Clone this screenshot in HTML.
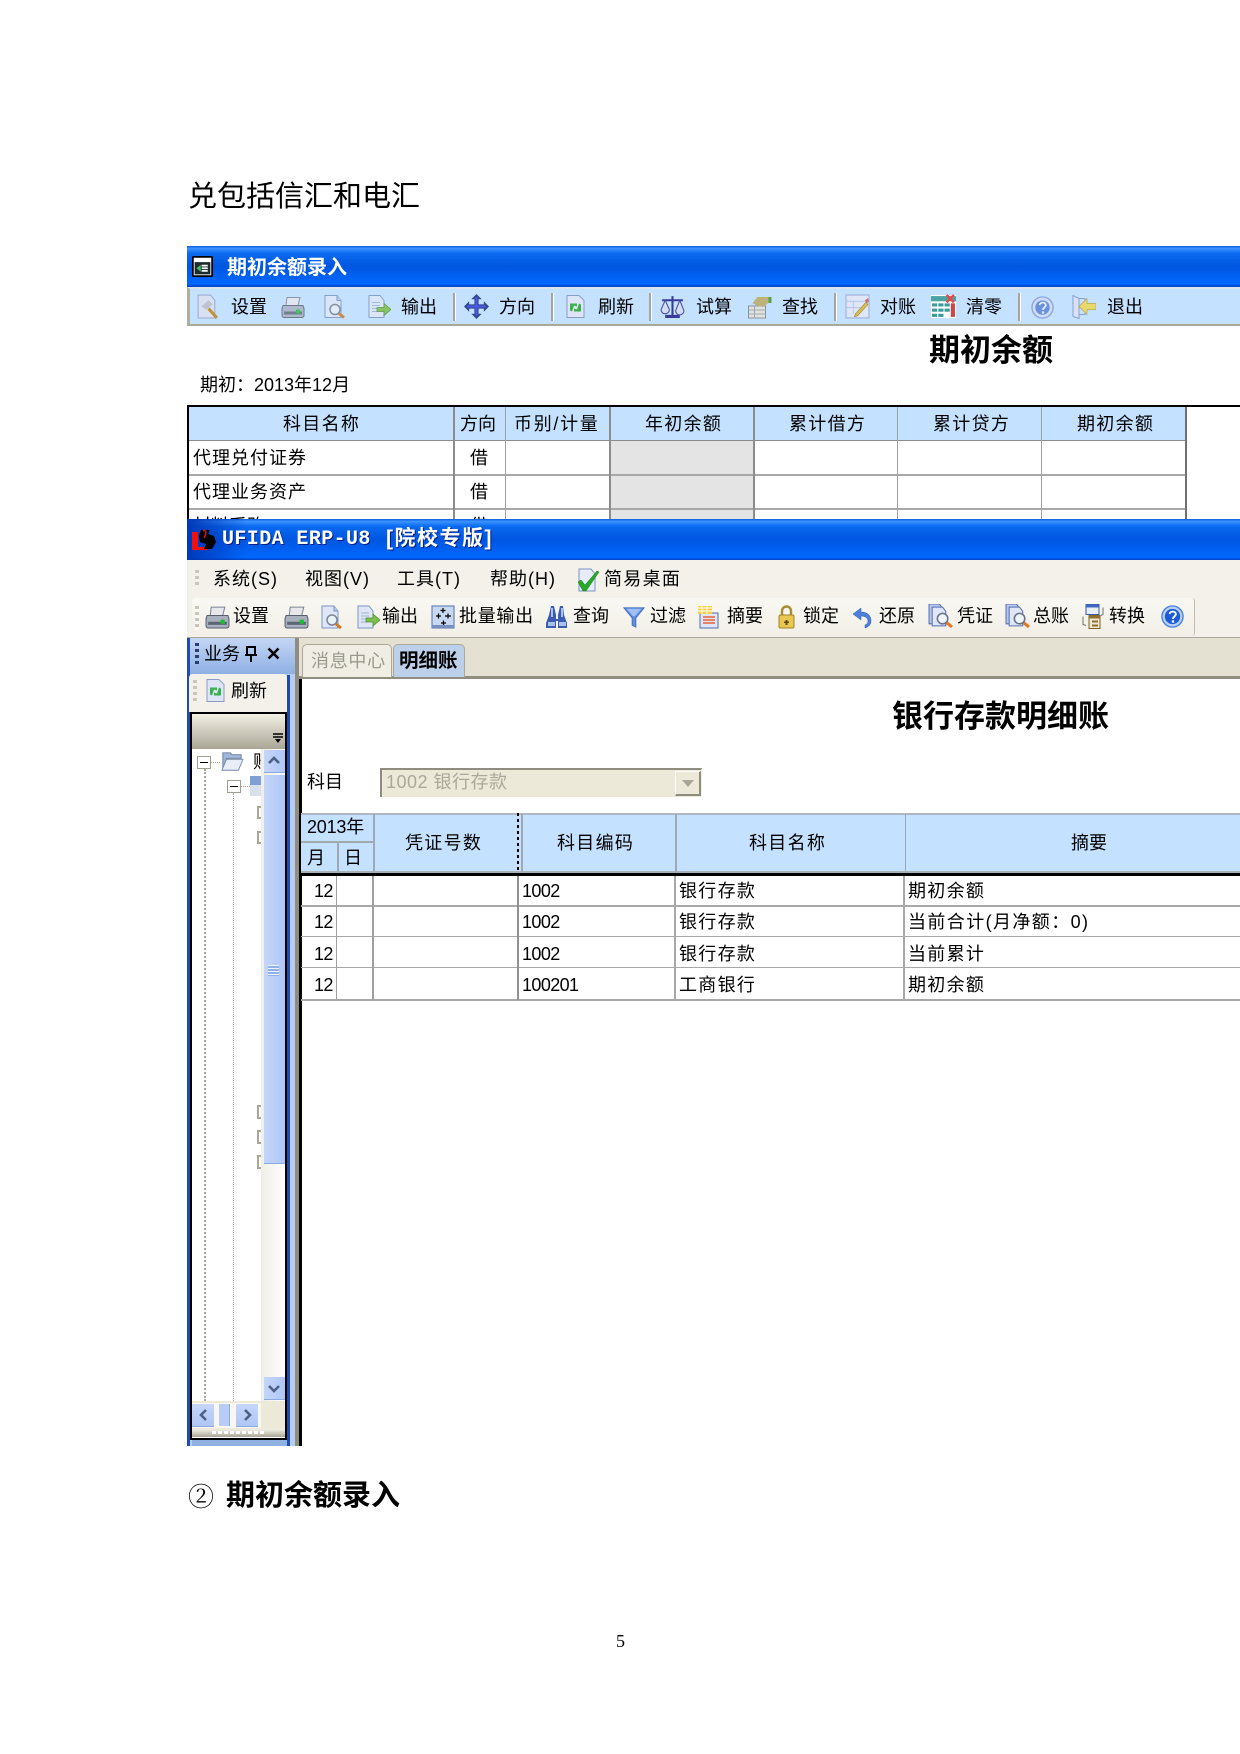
<!DOCTYPE html>
<html lang="zh"><head><meta charset="utf-8"><title>期初余额录入</title>
<style>
html,body{margin:0;padding:0;background:#fff}
#p{position:relative;width:1240px;height:1754px;overflow:hidden;background:#fff;font-family:"Liberation Sans","WenQuanYi Zen Hei","Noto Sans CJK SC",sans-serif;color:#000}
.t{position:absolute;white-space:nowrap;line-height:18px;font-size:18px;height:18px}
.r{position:absolute}
svg.i{position:absolute;overflow:hidden}
.b{font-weight:bold}
.w{letter-spacing:1.300px}
.d{letter-spacing:-.6px}
.m{letter-spacing:1px}
.title{position:absolute;left:187px;width:1053px;height:41px;background:linear-gradient(#0a5fe0 0,#3c93ff 6%,#0a6af0 18%,#0056e0 50%,#0064f8 82%,#0068ff 92%,#003fc0 100%)}
</style></head><body><div id="p">
<svg width="0" height="0" style="position:absolute"><defs>
<symbol id="pr" viewBox="0 0 24 24"><path d="M6 3h13l-2 8H5z" fill="#e8e8ec" stroke="#7c8494"/><path d="M2 11h20l1 3v7a2 2 0 0 1-2 2H3a2 2 0 0 1-2-2v-7z" fill="#a9b1bf" stroke="#58606e"/><path d="M3 17h18v3H3z" fill="#5d6674"/><rect x="15" y="15" width="4" height="4" fill="#18c030"/></symbol>
<symbol id="pv" viewBox="0 0 24 24"><path d="M2 1h12l4 5v17H2z" fill="#dfe7f7" stroke="#7c94c4"/><path d="M14 1v5h4" fill="#b8c8e8" stroke="#7c94c4"/><circle cx="12" cy="15" r="5" fill="#e8f0f8" stroke="#7a8496" stroke-width="1.500"/><path d="M16 19l5 4" stroke="#d07a28" stroke-width="3"/></symbol>
<symbol id="ex" viewBox="0 0 24 24"><path d="M2 1h11l4 5v17H2z" fill="#dfe7f7" stroke="#7c94c4"/><path d="M5 8h8M5 11h8M5 14h6M5 17h6" stroke="#9cb0d8"/><path d="M10 13h7V9l7 6-7 6v-4h-7z" fill="#7cc04c" stroke="#4c8a2c" stroke-width=".7"/></symbol>
<symbol id="se" viewBox="0 0 24 24"><path d="M3 1h12l4 5v17H3z" fill="#d8e0f2" stroke="#9cacd0"/><path d="M6 12l7-6 4 4-6 5z" fill="#bcc2d0"/><path d="M13 14l8 9" stroke="#c09438" stroke-width="3"/></symbol>
<symbol id="dr" viewBox="0 0 24 24"><path d="M12 0l5 5h-3v5h5V7l5 5-5 5v-3h-5v5h3l-5 5-5-5h3v-5H5v3l-5-5 5-5v3h5V5H7z" fill="#33478c"/><path d="M11 3h2v18h-2zM3 11h18v2H3z" fill="#4a5ae8"/></symbol>
<symbol id="rf" viewBox="0 0 24 24"><path d="M3 1h12l5 5v17H3z" fill="#dde5f6" stroke="#8c9cc8"/><path d="M6 9h7v3l-3-1-2 6-2-1zM17 17h-7v-3l3 1 2-6 2 1z" fill="#3cb04c"/></symbol>
<symbol id="sc" viewBox="0 0 24 24"><path d="M11 2h2v18h-2zM5 20h14v3H5zM2 5h20v2H2z" fill="#383c98"/><path d="M5 6l-4 9a4 4 0 0 0 8 0zM19 6l-4 10a4 4 0 0 0 8 0z" fill="#d4dcf0" stroke="#484e9c"/></symbol>
<symbol id="fd" viewBox="0 0 24 24"><rect x="1" y="11" width="17" height="12" fill="#e0e2e2" stroke="#8c9498"/><path d="M1 15h17M1 19h17M7 11v12" stroke="#a0a8ac"/><path d="M5 8l5-6h11l3 1v4l-3 1-6 4-5-1z" fill="#bcb27c"/><path d="M21 2h3v6h-3z" fill="#58a048"/></symbol>
<symbol id="dz" viewBox="0 0 24 24"><rect x="1" y="1" width="22" height="22" fill="#dfe7f6" stroke="#9cacd8"/><path d="M1 7h22M1 13h14M8 7v12" stroke="#b8c8e8"/><path d="M10 19l10-11 2 2-10 11-3 1z" fill="#d8c050" stroke="#a08830" stroke-width=".6"/><path d="M19 6l3-2 1 3-2 2z" fill="#d07070"/></symbol>
<symbol id="qz" viewBox="0 0 24 24"><rect x="0" y="1" width="24" height="22" fill="#fff"/><rect x="0" y="2" width="24" height="5" fill="#4aa4a4"/><g fill="#3c9c9c"><rect x="1" y="9" width="5" height="3"/><rect x="7" y="9" width="5" height="3"/><rect x="13" y="9" width="5" height="3"/><rect x="1" y="14" width="5" height="3"/><rect x="7" y="14" width="5" height="3"/><rect x="13" y="14" width="5" height="3"/><rect x="1" y="19" width="5" height="3"/><rect x="7" y="19" width="5" height="3"/></g><rect x="19" y="9" width="4" height="13" fill="#c84848"/><path d="M15 1l7 7M22 1l-7 7" stroke="#e84848" stroke-width="2.400"/></symbol>
<symbol id="he" viewBox="0 0 24 24"><circle cx="12" cy="12" r="11" fill="#cfdcf4" stroke="#8ca8e0" stroke-width="1.500"/><circle cx="12" cy="12" r="7.500" fill="#6a92dc"/><path d="M9 9.500c0-3.500 6.500-3.500 6.500 0 0 2.500-3 2.500-3 5" fill="none" stroke="#dfe8f8" stroke-width="2"/><rect x="11.300" y="16" width="2.400" height="2.400" fill="#dfe8f8"/></symbol>
<symbol id="hc" viewBox="0 0 24 24"><circle cx="12" cy="12" r="11" fill="#b8d0f8" stroke="#4c84e0" stroke-width="1.500"/><circle cx="12" cy="12" r="8" fill="#1c5cd8"/><path d="M9 9.500c0-3.500 6.500-3.500 6.500 0 0 2.500-3 2.500-3 5" fill="none" stroke="#fff" stroke-width="2"/><rect x="11.300" y="16" width="2.400" height="2.400" fill="#fff"/></symbol>
<symbol id="qt" viewBox="0 0 24 24"><path d="M1 1l6 3v20l-6-2z" fill="#d8e2f6" stroke="#8ca0d0"/><path d="M7 4h6v4M7 20h6v-3" fill="none" stroke="#8ca0d0"/><path d="M24 9h-9V4l-8 8 8 8v-5h9z" fill="#e8d870" stroke="#b8a848" stroke-width=".7"/></symbol>
<symbol id="ck" viewBox="0 0 24 24"><path d="M3 1h12l4 5v17H3z" fill="#e6ecf8" stroke="#7c94c4"/><path d="M2 14l3-2 4 5L21 3l2 1L10 23H7z" fill="#28a828" stroke="#187818" stroke-width=".5"/></symbol>
<symbol id="bl" viewBox="0 0 24 24"><rect x="1" y="1" width="22" height="22" fill="#c8d8f0" stroke="#5070b0"/><path d="M12 3v5M9.500 5.500h5M5 11h5M7.500 8.500v5M14 11h6M17 8.500v5M10 18h5M12.500 15.500v5" stroke="#000" stroke-width="1.200"/><path d="M1 20h22v3H1z" fill="#7890c0"/></symbol>
<symbol id="bi" viewBox="0 0 24 24"><path d="M6 1h3l2 9v4h2v-4l2-9h3l1 9 3 8v5h-9v-7h-2v7H1v-5l3-8z" fill="#3c5cb0"/><path d="M6 3h2v9H6zM16 3h2v9h-2zM3 17h7v4H3zM14 17h7v4h-7z" fill="#a8c0ec"/></symbol>
<symbol id="fi" viewBox="0 0 24 24"><path d="M1 2h22L14 13v10l-4-2v-8z" fill="#6490e0" stroke="#3c68c0"/><path d="M4 3h16l-7 8h-2z" fill="#a0c0f4"/></symbol>
<symbol id="su" viewBox="0 0 24 24"><path d="M3 8h18v15H3z" fill="#dfe7f7" stroke="#4c6cb0"/><path d="M6 12h12M6 15h12M6 18h12" stroke="#e86038" stroke-width="1.500"/><path d="M1 1h14v8H1z" fill="#f8d040"/><path d="M1 3h14M1 6h14M5 1v8M10 1v8" stroke="#fff"/></symbol>
<symbol id="lk" viewBox="0 0 17 24"><path d="M4 11V6a4.500 4.500 0 0 1 9 0v5" fill="none" stroke="#a88c30" stroke-width="2.400"/><rect x="1" y="10" width="15" height="13" rx="1.500" fill="#e8c850" stroke="#a08428"/><path d="M7.500 15h2v5h-2zM6 16.500h5v1.500H6z" fill="#604c10"/></symbol>
<symbol id="un" viewBox="0 0 20 24"><path d="M1 9l8-6v4c7 0 10 4 10 9 0 3-2 6-6 7v-3c2-1 3-2 3-4 0-3-3-5-7-5v4z" fill="#4c80dc" stroke="#2c5cb0" stroke-width=".5"/></symbol>
<symbol id="vo" viewBox="0 0 24 24"><path d="M1 0h10l3 4v15H1z" fill="#b8c8ec" stroke="#5870b0"/><path d="M4 3h10l3 4v14H4z" fill="#dfe7f7" stroke="#5870b0"/><circle cx="14" cy="14" r="5" fill="#eef4fa" stroke="#68748a" stroke-width="1.500"/><path d="M18 18l5 4" stroke="#e07828" stroke-width="3"/></symbol>
<symbol id="zh" viewBox="0 0 24 24"><path d="M5 0h13v10H5z" fill="#e8eef8" stroke="#3858a8"/><path d="M5 0h13v3H5z" fill="#4068c0"/><path d="M8 11h11v13H8z" fill="#f0e8d0" stroke="#806028"/><path d="M8 11h11v3H8zM11 16h6v2h-6zM11 20h6v2h-6z" fill="#907030"/><path d="M2 12v8l3 1M22 3v7l-2 1" fill="none" stroke="#707070"/></symbol>
<symbol id="wn" viewBox="0 0 24 24"><rect x="0" y="0" width="24" height="24" rx="2" fill="#000"/><rect x="2" y="2" width="20" height="20" fill="#fff"/><rect x="3" y="7" width="18" height="14" fill="#1c2c2c"/><path d="M5 14l5-4v8z" fill="#40c060"/><path d="M11 10h7v2h-7zM11 13h7v2h-7zM11 16h7v2h-7z" fill="#fff"/></symbol>
<symbol id="fo" viewBox="0 0 24 24"><path d="M2 2h8l2 2h10v4H6L2 20z" fill="#a0b8dc" stroke="#6a7a98"/><path d="M6 9h18l-5 12H1z" fill="#e8eef8" stroke="#7888a8"/></symbol>
<symbol id="lg" viewBox="0 0 26 22"><path d="M1 3h6v15h10v3H1z" fill="#f01010"/><path d="M10 1h9l-2 4 6 2 2 6-4 7h-8l2-5-6-2-1-6z" fill="#000"/><path d="M12 2c3-2 4 2 1 7" fill="none" stroke="#d01030" stroke-width="1.600"/></symbol>
</defs></svg>

<div class="t" style="left:188px;top:182px;font-size:29px;line-height:30px;height:30px">兑包括信汇和电汇</div>

<!-- window 1 -->
<div class="title" style="top:246px"></div>
<svg class="i" style="left:192px;top:256px" width="21" height="21"><use href="#wn"/></svg>
<div class="t b" style="left:227px;top:258px;font-size:20px;line-height:20px;height:20px;color:#fff">期初余额录入</div>
<div class="r" style="left:187px;top:287px;width:1053px;height:39px;background:#c4e1ff;box-sizing:border-box;border-top:2px solid #d8e4ee;border-left:3px solid #b0ae9c;border-bottom:2px solid #aca899"></div>

<svg class="i" style="left:195px;top:294px" width="25" height="25"><use href="#se"/></svg><span class="t" style="left:231px;top:298px">设置</span>
<svg class="i" style="left:281px;top:294px" width="24" height="25"><use href="#pr" opacity=".8"/></svg>
<svg class="i" style="left:323px;top:294px" width="24" height="25"><use href="#pv" opacity=".85"/></svg>
<svg class="i" style="left:367px;top:294px" width="24" height="25"><use href="#ex" opacity=".85"/></svg><span class="t" style="left:401px;top:298px">输出</span>
<div class="r" style="left:453px;top:293px;width:2px;height:28px;background:#a8a698;border-right:1px solid #fff"></div>
<svg class="i" style="left:464px;top:294px" width="25" height="25"><use href="#dr"/></svg><span class="t" style="left:499px;top:298px">方向</span>
<div class="r" style="left:551px;top:293px;width:2px;height:28px;background:#a8a698;border-right:1px solid #fff"></div>
<svg class="i" style="left:564px;top:293px" width="24" height="27"><use href="#rf"/></svg><span class="t" style="left:598px;top:298px">刷新</span>
<div class="r" style="left:649px;top:293px;width:2px;height:28px;background:#a8a698;border-right:1px solid #fff"></div>
<svg class="i" style="left:660px;top:294px" width="25" height="25"><use href="#sc"/></svg><span class="t" style="left:696px;top:298px">试算</span>
<svg class="i" style="left:747px;top:295px" width="25" height="24"><use href="#fd"/></svg><span class="t" style="left:782px;top:298px">查找</span>
<div class="r" style="left:834px;top:293px;width:2px;height:28px;background:#a8a698;border-right:1px solid #fff"></div>
<svg class="i" style="left:845px;top:294px" width="25" height="25"><use href="#dz"/></svg><span class="t" style="left:880px;top:298px">对账</span>
<svg class="i" style="left:931px;top:294px" width="25" height="25"><use href="#qz"/></svg><span class="t" style="left:966px;top:298px">清零</span>
<div class="r" style="left:1018px;top:293px;width:2px;height:28px;background:#a8a698;border-right:1px solid #fff"></div>
<svg class="i" style="left:1031px;top:296px" width="23" height="23"><use href="#he"/></svg>
<svg class="i" style="left:1072px;top:294px" width="24" height="25"><use href="#qt"/></svg><span class="t" style="left:1107px;top:298px">退出</span>

<div class="t b" style="left:929px;top:336px;font-size:31px;line-height:30px;height:30px">期初余额</div>
<div class="t" style="left:200px;top:376px">期初：2013年12月</div>

<!-- table 1 -->
<div class="r" style="left:187px;top:405px;width:1053px;height:2px;background:#000"></div>
<div class="r" style="left:187px;top:405px;width:2px;height:115px;background:#000"></div>
<div class="r" style="left:189px;top:407px;width:996px;height:33px;background:#c4e1ff"></div>
<div class="r" style="left:611px;top:441px;width:143px;height:79px;background:#e4e4e4"></div>
<div class="r" style="left:189px;top:440px;width:996px;height:1px;background:#8c8c8c"></div>
<div class="r" style="left:189px;top:474px;width:996px;height:2px;background:#a8a8a8"></div>
<div class="r" style="left:189px;top:508px;width:996px;height:2px;background:#a8a8a8"></div>
<div class="r" style="left:453px;top:407px;width:2px;height:113px;background:#8c8c8c"></div>
<div class="r" style="left:505px;top:407px;width:1px;height:113px;background:#a0a0a0"></div>
<div class="r" style="left:609px;top:407px;width:2px;height:113px;background:#8c8c8c"></div>
<div class="r" style="left:753px;top:407px;width:2px;height:113px;background:#8c8c8c"></div>
<div class="r" style="left:897px;top:407px;width:1px;height:113px;background:#a0a0a0"></div>
<div class="r" style="left:1041px;top:407px;width:1px;height:113px;background:#a0a0a0"></div>
<div class="r" style="left:1185px;top:407px;width:2px;height:113px;background:#707070"></div>
<span class="t w" style="left:283px;top:415px">科目名称</span>
<span class="t" style="left:460px;top:415px">方向</span>
<span class="t" style="left:514px;top:415px;letter-spacing:1.700px">币别/计量</span>
<span class="t w" style="left:645px;top:415px">年初余额</span>
<span class="t w" style="left:789px;top:415px">累计借方</span>
<span class="t w" style="left:933px;top:415px">累计贷方</span>
<span class="t w" style="left:1077px;top:415px">期初余额</span>
<span class="t m" style="left:193px;top:449px">代理兑付证券</span><span class="t" style="left:470px;top:449px">借</span>
<span class="t m" style="left:193px;top:483px">代理业务资产</span><span class="t" style="left:470px;top:483px">借</span>
<span class="t" style="left:193px;top:517px">材料采购</span><span class="t" style="left:470px;top:517px">借</span>

<!-- window 2 -->
<div class="title" style="top:519px;background:linear-gradient(#0a5fe0 0,#3c93ff 6%,#0a6af0 18%,#0056e0 50%,#0064f8 85%,#0068ff 94%,#003fc0 100%)"></div>
<div class="r" style="left:187px;top:519px;width:60px;height:41px;background:linear-gradient(90deg,#0038b8,rgba(0,56,184,0))"></div>
<svg class="i" style="left:191px;top:529px" width="26" height="22"><use href="#lg"/></svg>
<span class="t b" style="left:222px;top:530px;font-family:'Liberation Mono',monospace;font-size:20px;line-height:20px;height:20px;letter-spacing:.4px;color:#fff;text-shadow:1px 1px 0 #001c80">UFIDA ERP-U8</span>
<span class="t b" style="left:386px;top:529px;font-family:'Liberation Sans','Noto Sans CJK SC',sans-serif;font-size:21px;line-height:20px;height:20px;letter-spacing:1.500px;color:#fff;text-shadow:1px 1px 0 #001c80">[院校专版]</span>

<div class="r" style="left:187px;top:560px;width:1053px;height:78px;background:#f3f1e9"></div>
<div class="r" style="left:195px;top:570px;width:4px;height:17px;background:repeating-linear-gradient(#c8c6b8 0 3px,#f3f1e9 3px 6px)"></div>
<span class="t m" style="left:213px;top:570px">系统(S)</span>
<span class="t m" style="left:305px;top:570px">视图(V)</span>
<span class="t m" style="left:397px;top:570px">工具(T)</span>
<span class="t m" style="left:490px;top:570px">帮助(H)</span>
<svg class="i" style="left:576px;top:568px" width="24" height="24"><use href="#ck"/></svg>
<span class="t w" style="left:604px;top:570px">简易桌面</span>

<div class="r" style="left:192px;top:598px;width:1002px;height:38px;background:linear-gradient(#f9f8f3,#f1efe6);border-radius:3px;border-right:1px solid #c0beb0"></div>
<div class="r" style="left:187px;top:637px;width:1053px;height:1px;background:#aca899"></div>
<div class="r" style="left:195px;top:606px;width:4px;height:24px;background:repeating-linear-gradient(#c8c6b8 0 3px,#f9f8f3 3px 6px)"></div>

<svg class="i" style="left:205px;top:604px" width="25" height="25"><use href="#pr"/></svg><span class="t" style="left:233px;top:607px">设置</span>
<svg class="i" style="left:284px;top:604px" width="25" height="25"><use href="#pr"/></svg>
<svg class="i" style="left:320px;top:605px" width="24" height="24"><use href="#pv"/></svg>
<svg class="i" style="left:356px;top:605px" width="24" height="24"><use href="#ex"/></svg><span class="t" style="left:382px;top:607px">输出</span>
<svg class="i" style="left:431px;top:605px" width="24" height="24"><use href="#bl"/></svg><span class="t" style="left:459px;top:607px;letter-spacing:.7px">批量输出</span>
<svg class="i" style="left:545px;top:605px" width="24" height="24"><use href="#bi"/></svg><span class="t" style="left:573px;top:607px">查询</span>
<svg class="i" style="left:622px;top:606px" width="24" height="22"><use href="#fi"/></svg><span class="t" style="left:650px;top:607px">过滤</span>
<svg class="i" style="left:697px;top:605px" width="24" height="24"><use href="#su"/></svg><span class="t" style="left:727px;top:607px">摘要</span>
<svg class="i" style="left:778px;top:605px" width="17" height="24"><use href="#lk"/></svg><span class="t" style="left:803px;top:607px">锁定</span>
<svg class="i" style="left:852px;top:605px" width="20" height="24"><use href="#un"/></svg><span class="t" style="left:879px;top:607px">还原</span>
<svg class="i" style="left:928px;top:604px" width="25" height="25"><use href="#vo"/></svg><span class="t" style="left:957px;top:607px">凭证</span>
<svg class="i" style="left:1005px;top:604px" width="25" height="25"><use href="#vo"/></svg><span class="t" style="left:1033px;top:607px">总账</span>
<svg class="i" style="left:1081px;top:604px" width="24" height="25"><use href="#zh"/></svg><span class="t" style="left:1109px;top:607px">转换</span>
<svg class="i" style="left:1161px;top:605px" width="23" height="23"><use href="#hc"/></svg>

<!-- tab band -->
<div class="r" style="left:295px;top:638px;width:945px;height:40px;background:#e4e1d2"></div>
<div class="r" style="left:295px;top:676px;width:945px;height:3px;background:#908e80"></div>
<div class="r" style="left:302px;top:644px;width:90px;height:33px;background:#f0eee4;border:1px solid #aca899;border-bottom:0;border-radius:5px 5px 0 0;box-sizing:border-box"></div>
<span class="t" style="left:311px;top:652px;color:#9a9a8c;letter-spacing:.7px">消息中心</span>
<div class="r" style="left:393px;top:644px;width:72px;height:33px;background:#bdd0ea;border:1px solid #aca899;border-bottom:0;border-radius:5px 5px 0 0;box-sizing:border-box"></div>
<span class="t b" style="left:399px;top:652px;font-size:19.500px">明细账</span>

<!-- left panel -->
<div class="r" style="left:187px;top:638px;width:108px;height:808px;background:#b4cdf0"></div>
<div class="r" style="left:187px;top:638px;width:3px;height:808px;background:#1e4cb0"></div>
<div class="r" style="left:287px;top:675px;width:3px;height:771px;background:#1e4cb0"></div>
<div class="r" style="left:295px;top:638px;width:4px;height:808px;background:#8f8d7f"></div>
<div class="r" style="left:299px;top:679px;width:3px;height:767px;background:#000"></div>
<div class="r" style="left:190px;top:638px;width:105px;height:36px;background:linear-gradient(#c4d6f4,#8fb0e4)"></div>
<div class="r" style="left:195px;top:643px;width:4px;height:24px;background:repeating-linear-gradient(#283c78 0 3px,transparent 3px 6px)"></div>
<span class="t" style="left:204px;top:645px">业务</span>
<svg class="i" style="left:245px;top:646px" width="12" height="16"><path d="M2 1h8v8H2zM0 9h12M6 9v7" fill="none" stroke="#000" stroke-width="2"/></svg>
<svg class="i" style="left:267px;top:647px" width="13" height="13"><path d="M1.500 1.500l10 10M11.500 1.500l-10 10" stroke="#000" stroke-width="2.600"/></svg>
<div class="r" style="left:189px;top:674px;width:98px;height:38px;background:#f3f1e9;border-radius:4px 4px 0 0"></div>
<div class="r" style="left:193px;top:680px;width:4px;height:24px;background:repeating-linear-gradient(#c8c6b8 0 3px,#f3f1e9 3px 6px)"></div>
<svg class="i" style="left:204px;top:678px" width="24" height="25"><use href="#rf"/></svg>
<span class="t" style="left:231px;top:682px">刷新</span>
<!-- tree panel -->
<div class="r" style="left:190px;top:712px;width:97px;height:728px;background:#fff;box-sizing:border-box;border:2px solid #000"></div>
<div class="r" style="left:192px;top:714px;width:93px;height:35px;background:linear-gradient(#f2efe4,#aaa696)"></div>
<svg class="i" style="left:273px;top:733px" width="11" height="11"><path d="M0 1h10M0 4h10" stroke="#000" stroke-width="1.500"/><path d="M2 6h6l-3 4z"/></svg>
<div class="r" style="left:204px;top:769px;width:0;height:632px;border-left:2px dotted #a8a69a"></div>
<div class="r" style="left:233px;top:793px;width:0;height:608px;border-left:1px dotted #a8a69a"></div>
<div class="r" style="left:211px;top:762px;width:9px;height:0;border-top:1px dotted #a8a69a"></div>
<div class="r" style="left:240px;top:786px;width:10px;height:0;border-top:1px dotted #a8a69a"></div>
<div class="r" style="left:197px;top:756px;width:14px;height:13px;background:#fff;box-sizing:border-box;border:1px solid #a09e90"></div><div class="r" style="left:200px;top:762px;width:8px;height:1px;background:#000"></div>
<div class="r" style="left:227px;top:780px;width:14px;height:13px;background:#fff;box-sizing:border-box;border:1px solid #a09e90"></div><div class="r" style="left:230px;top:786px;width:8px;height:1px;background:#000"></div>
<svg class="i" style="left:220px;top:751px" width="24" height="22"><use href="#fo"/></svg>
<svg class="i" style="left:250px;top:775px" width="11" height="22" viewBox="0 0 11 22" preserveAspectRatio="xMinYMin slice"><rect x="0" y="1" width="11" height="20" fill="#7fa0d4"/><rect x="0" y="10" width="11" height="11" fill="#d8e0ec"/></svg>
<div class="r" style="left:253px;top:752px;width:8px;height:20px;overflow:hidden"><span class="t" style="left:0;top:1px">账</span></div>
<div class="r" style="left:257px;top:806px;width:4px;height:13px;background:#fff;border:2px solid #aca899;border-right:0;box-sizing:border-box"></div>
<div class="r" style="left:257px;top:831px;width:4px;height:13px;background:#fff;border:2px solid #aca899;border-right:0;box-sizing:border-box"></div>
<div class="r" style="left:257px;top:1105px;width:4px;height:14px;background:#fff;border:2px solid #aca899;border-right:0;box-sizing:border-box"></div>
<div class="r" style="left:257px;top:1130px;width:4px;height:14px;background:#fff;border:2px solid #aca899;border-right:0;box-sizing:border-box"></div>
<div class="r" style="left:257px;top:1155px;width:4px;height:14px;background:#fff;border:2px solid #aca899;border-right:0;box-sizing:border-box"></div>
<!-- v scroll -->
<div class="r" style="left:261px;top:749px;width:24px;height:652px;background:linear-gradient(90deg,#f0eee8,#fefefe)"></div>
<div class="r" style="left:264px;top:750px;width:21px;height:22px;background:linear-gradient(90deg,#c4d6fb,#b0c6f4);border-bottom:1px solid #8ca8e0"></div>
<svg class="i" style="left:267px;top:754px" width="14" height="12"><path d="M2 9l5-5 5 5" fill="none" stroke="#4d6185" stroke-width="2.600"/></svg>
<div class="r" style="left:264px;top:775px;width:21px;height:388px;background:linear-gradient(90deg,#c4d6fb,#b0c6f4);border-bottom:1px solid #8ca8e0"></div>
<div class="r" style="left:268px;top:965px;width:11px;height:11px;background:repeating-linear-gradient(#eef3ff 0 1px,#8fb0ec 1px 3px)"></div>
<div class="r" style="left:264px;top:1377px;width:21px;height:22px;background:linear-gradient(90deg,#c4d6fb,#b0c6f4);border-bottom:1px solid #8ca8e0"></div>
<svg class="i" style="left:267px;top:1383px" width="14" height="12"><path d="M2 3l5 5 5-5" fill="none" stroke="#4d6185" stroke-width="2.600"/></svg>
<!-- h scroll -->
<div class="r" style="left:192px;top:1401px;width:93px;height:28px;background:#ece9d8"></div>
<div class="r" style="left:192px;top:1403px;width:69px;height:25px;background:#f8f7f2"></div>
<div class="r" style="left:192px;top:1404px;width:22px;height:22px;background:linear-gradient(#c4d6fb,#b0c6f4);border-bottom:1px solid #8ca8e0"></div>
<svg class="i" style="left:197px;top:1408px" width="12" height="14"><path d="M9 2L4 7l5 5" fill="none" stroke="#4d6185" stroke-width="2.600"/></svg>
<div class="r" style="left:219px;top:1404px;width:10px;height:22px;background:#b8ccf6;border-right:1px solid #8ca8e0"></div>
<div class="r" style="left:236px;top:1404px;width:22px;height:22px;background:linear-gradient(#c4d6fb,#b0c6f4);border-bottom:1px solid #8ca8e0"></div>
<svg class="i" style="left:242px;top:1408px" width="12" height="14"><path d="M3 2l5 5-5 5" fill="none" stroke="#4d6185" stroke-width="2.600"/></svg>
<div class="r" style="left:192px;top:1429px;width:93px;height:8px;background:linear-gradient(#f3f1e6,#aaa696)"></div>
<div class="r" style="left:212px;top:1431px;width:54px;height:3px;background:repeating-linear-gradient(90deg,#fff 0 4px,transparent 4px 6px)"></div>
<div class="r" style="left:192px;top:1440px;width:95px;height:6px;background:#8fb0e0"></div>

<!-- doc header -->
<div class="t b" style="left:892px;top:701px;font-size:31px;line-height:31px;height:31px">银行存款明细账</div>
<span class="t" style="left:307px;top:773px">科目</span>
<div class="r" style="left:380px;top:768px;width:322px;height:29px;background:#ece9d8;box-sizing:border-box;border-top:2px solid #8f8d7f;border-left:2px solid #8f8d7f;border-right:1px solid #f4f2e8"></div>
<span class="t" style="left:386px;top:773px;color:#aca899;letter-spacing:.5px">1002 银行存款</span>
<div class="r" style="left:675px;top:771px;width:26px;height:25px;background:#ece9d8;box-sizing:border-box;border-right:2px solid #8f8d7f;border-bottom:2px solid #8f8d7f;border-top:1px solid #fff;border-left:1px solid #fff"></div>
<svg class="i" style="left:681px;top:779px" width="14" height="10"><path d="M1 1h12L7 8z" fill="#a8a698"/></svg>

<!-- table 2 -->
<div class="r" style="left:301px;top:813px;width:939px;height:60px;background:#c4e1ff;box-sizing:border-box;border-top:2px solid #aeb8c4"></div>
<div class="r" style="left:301px;top:871px;width:939px;height:2px;background:#a8b0b8"></div>
<div class="r" style="left:301px;top:841px;width:72px;height:2px;background:#a0a8b0"></div>
<div class="r" style="left:337px;top:842px;width:2px;height:30px;background:#a0a8b0"></div>
<div class="r" style="left:373px;top:814px;width:2px;height:58px;background:#a0a8b0"></div>
<div class="r" style="left:517px;top:813px;width:2px;height:61px;background:repeating-linear-gradient(#000 0 3px,transparent 3px 6px)"></div>
<div class="r" style="left:521px;top:814px;width:2px;height:58px;background:#a0a8b0"></div>
<div class="r" style="left:675px;top:814px;width:2px;height:58px;background:#a0a8b0"></div>
<div class="r" style="left:905px;top:814px;width:1px;height:58px;background:#a0a8b0"></div>
<div class="r" style="left:301px;top:873px;width:939px;height:3px;background:#000"></div>
<div class="r" style="left:301px;top:905px;width:939px;height:2px;background:#a8a8a8"></div>
<div class="r" style="left:301px;top:936px;width:939px;height:1px;background:#a8a8a8"></div>
<div class="r" style="left:301px;top:967px;width:939px;height:1px;background:#a8a8a8"></div>
<div class="r" style="left:301px;top:999px;width:939px;height:2px;background:#a8a8a8"></div>
<div class="r" style="left:336px;top:876px;width:1px;height:124px;background:#a0a0a0"></div>
<div class="r" style="left:372px;top:876px;width:2px;height:124px;background:#a0a0a0"></div>
<div class="r" style="left:517px;top:876px;width:2px;height:124px;background:#909090"></div>
<div class="r" style="left:674px;top:876px;width:2px;height:124px;background:#a8a8a8"></div>
<div class="r" style="left:903px;top:876px;width:2px;height:124px;background:#a8a8a8"></div>

<span class="t" style="left:307px;top:818px;letter-spacing:-.2px">2013年</span>
<span class="t" style="left:307px;top:849px">月</span>
<span class="t" style="left:344px;top:849px">日</span>
<span class="t w" style="left:405px;top:834px">凭证号数</span>
<span class="t w" style="left:557px;top:834px">科目编码</span>
<span class="t w" style="left:749px;top:834px">科目名称</span>
<span class="t" style="left:1071px;top:834px">摘要</span>

<span class="t d" style="left:314px;top:882px">12</span><span class="t d" style="left:522px;top:882px">1002</span><span class="t w" style="left:679px;top:882px">银行存款</span><span class="t w" style="left:908px;top:882px">期初余额</span>
<span class="t d" style="left:314px;top:913px">12</span><span class="t d" style="left:522px;top:913px">1002</span><span class="t w" style="left:679px;top:913px">银行存款</span><span class="t" style="left:908px;top:913px;letter-spacing:1.400px">当前合计(月净额：0)</span>
<span class="t d" style="left:314px;top:945px">12</span><span class="t d" style="left:522px;top:945px">1002</span><span class="t w" style="left:679px;top:945px">银行存款</span><span class="t w" style="left:908px;top:945px">当前累计</span>
<span class="t d" style="left:314px;top:976px">12</span><span class="t d" style="left:522px;top:976px">100201</span><span class="t w" style="left:679px;top:976px">工商银行</span><span class="t w" style="left:908px;top:976px">期初余额</span>

<span class="t" style="left:188px;top:1481px;font-size:26px;line-height:30px;height:30px;font-family:'Noto Serif CJK SC','Liberation Serif',serif">②</span>
<div class="t b" style="left:226px;top:1481px;font-size:29px;line-height:30px;height:30px">期初余额录入</div>
<span class="t" style="left:616px;top:1632px;font-family:'Liberation Serif',serif">5</span>
</div></body></html>
